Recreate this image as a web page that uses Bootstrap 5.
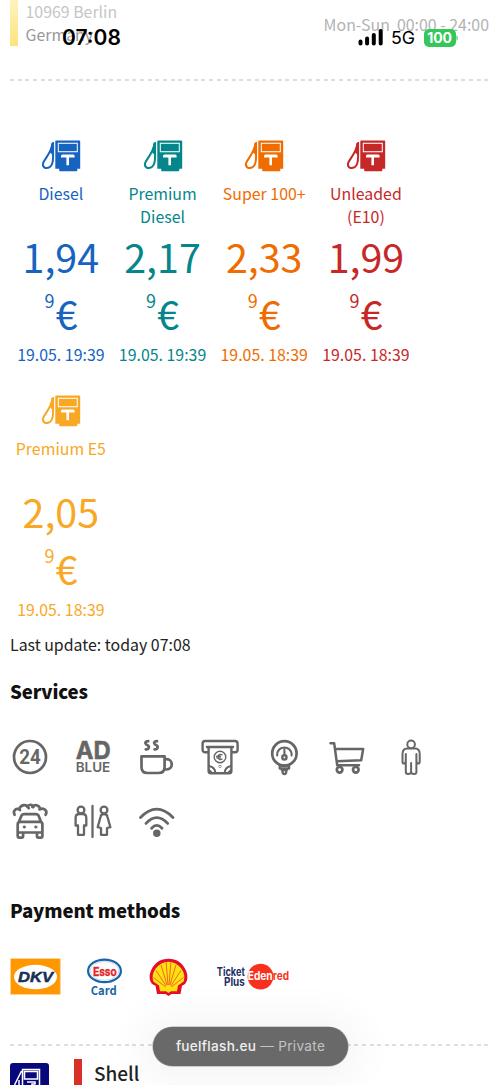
<!DOCTYPE html>
<html lang="en">
<head>
<meta charset="utf-8">
<meta name="viewport" content="width=device-width, initial-scale=1">
<title>fuelflash.eu</title>
<link href="https://cdn.jsdelivr.net/npm/bootstrap@5.3.0/dist/css/bootstrap.min.css" rel="stylesheet">
<style>
html,body{height:1085px;overflow:hidden}
body{font-family:"Noto Sans CJK SC",sans-serif;font-size:15.9px;line-height:23px;color:#222;background:#fff}
.screen{width:500px;height:1085px;padding:0 11px 0 10px}
.address{height:79px}
.address .bar{width:8px;height:46px;background:linear-gradient(#fdf3c0,#fde47c)}
.address .lines{padding:0 0 0 7.5px}
.address .hours{padding-top:13px;color:#b3b3b3;white-space:pre}
.dashes{height:2px;background:repeating-linear-gradient(90deg,#dedede 0 4px,transparent 4px 7.65px)}
.fuels{padding-top:59px}
.fuel{width:101.7px;height:254.5px}
.fuel svg{width:40px;height:32px}
.fuel .kind{height:46px;margin-top:10px;padding:0 6px}
.price{font-size:39.4px;line-height:57px;margin-top:-1px}
.price sup{font-size:18px;top:-22px;line-height:0;vertical-align:baseline;margin-right:1px}
.stamp{margin-top:2px;height:23px}
h2.section{font-size:18.6px;font-weight:900;line-height:26px;color:#111;letter-spacing:-.12px}
.services{width:447px;padding-left:1.5px;margin-top:35px;gap:28px 27.5px}
.services svg{width:36px;height:36px;fill:none;stroke:#666;stroke-width:2.7;stroke-linecap:round;stroke-linejoin:round;overflow:visible}
.logos{margin-top:35px;height:40px}
.nextstation{height:28px}
.redbar{width:8px;height:26px;background:#d9302a}
.statusbar{top:24px;left:0;width:500px;height:26px;font-family:Inter,sans-serif;color:#000}
.clock{font-size:21px;font-weight:600;line-height:28px}
.battery{width:32px;height:17.5px;border-radius:5px;background:#34c759;color:#fff;font-size:14px;font-weight:700;line-height:17.5px;letter-spacing:-.2px}
.urlpill{left:153px;top:1027px;width:195px;height:39px;background:#696969;box-shadow:0 2px 40px 14px rgba(0,0,0,.045),0 0 0 .6px #aaa;font:500 13.6px/39px Inter,sans-serif;color:#f0f0f0;letter-spacing:.3px}
.urlpill span{color:#c3c3c3;font-weight:400}
</style>
</head>
<body>
<svg class="d-none">
  <symbol id="pump" viewBox="0 0 40 32">
    <path fill="currentColor" fill-rule="evenodd" d="M15 .6H38.5Q39.2.6 39.2 1.4V28.7H36.3V30.4Q36.3 31.2 35.5 31.2H19.2Q18.2 31.2 18.2 30.4V28.7H14.3V1.4Q14.3.6 15 .6ZM16.8 2.8V12.2H36.8V2.8ZM20 15.2V17.6H25.4V25.3H28V17.6H33.6V15.2H32.8V14.6H20.8V15.2Z"/>
    <path fill="currentColor" d="M17.8 3.8H35.8V11.2H17.8Z"/>
    <path fill="none" stroke="currentColor" stroke-width="2" d="M11.6 3.2C10.5 12 5.2 17 2.5 22.2C.4 27 4.7 29.4 8.7 27.1C12.3 25 12.1 20 12.1 15.5V2.2"/>
    <path fill="currentColor" d="M10.4 3.5L13 1.8V16L9 12.5Z"/>
  </symbol>
</svg>
<main class="screen position-relative overflow-hidden">
  <section class="address d-flex">
    <div class="bar"></div>
    <div class="lines flex-grow-1"><div style="color:#c6c6c6">10969 Berlin</div><div style="color:#999">Germany</div></div>
    <div class="hours">Mon-Sun  00:00 - 24:00</div>
  </section>
  <div class="dashes"></div>

  <section class="fuels d-flex flex-wrap text-center">
    <article class="fuel" style="color:#1763c0"><svg class="d-block mx-auto"><use href="#pump"/></svg><div class="kind">Diesel</div><div class="price">1,94<br><sup>9</sup>€</div><div class="stamp">19.05. 19:39</div></article>
    <article class="fuel" style="color:#05868b"><svg class="d-block mx-auto"><use href="#pump"/></svg><div class="kind">Premium Diesel</div><div class="price">2,17<br><sup>9</sup>€</div><div class="stamp">19.05. 19:39</div></article>
    <article class="fuel" style="color:#ef6c00"><svg class="d-block mx-auto"><use href="#pump"/></svg><div class="kind">Super 100+</div><div class="price">2,33<br><sup>9</sup>€</div><div class="stamp">19.05. 18:39</div></article>
    <article class="fuel" style="color:#c62828"><svg class="d-block mx-auto"><use href="#pump"/></svg><div class="kind">Unleaded (E10)</div><div class="price">1,99<br><sup>9</sup>€</div><div class="stamp">19.05. 18:39</div></article>
    <article class="fuel" style="color:#f9a825"><svg class="d-block mx-auto"><use href="#pump"/></svg><div class="kind text-nowrap px-0">Premium E5</div><div class="price">2,05<br><sup>9</sup>€</div><div class="stamp">19.05. 18:39</div></article>
  </section>

  <p class="update mb-0" style="margin-top:-16px">Last update: today 07:08</p>

  <h2 class="section mb-0" style="margin-top:21.5px">Services</h2>
  <div class="services d-flex flex-wrap">
    <svg viewBox="0 0 36 36"><circle cx="18" cy="18" r="16"/><text x="18" y="25" text-anchor="middle" font-family="Roboto" font-weight="700" font-size="20" fill="#666" stroke="none" textLength="21.5" lengthAdjust="spacingAndGlyphs">24</text></svg>
    <svg viewBox="0 0 36 36"><g fill="#666" text-anchor="middle" font-family="Inter"><text x="18.2" y="20" font-size="24.5" font-weight="700" stroke-width=".5" textLength="35" lengthAdjust="spacingAndGlyphs">AD</text><text x="18" y="33.4" font-size="13.4" font-weight="600" stroke="none" textLength="34.5" lengthAdjust="spacingAndGlyphs">BLUE</text></g></svg>
    <svg viewBox="0 0 36 36"><path d="M2.5 17.3H25.6V28Q25.6 34 19.5 34H8.5Q2.5 34 2.5 28ZM25.8 20.2H27.5C34.5 20.2 34.5 30.5 27.5 30.5H25.4M9.2 2.2Q6 2.5 6.4 4.3Q6.7 5.7 8.4 6.2Q10.5 7 9.6 9.2Q8.8 10.8 6.8 10.4M18 2.2Q14.8 2.5 15.2 4.3Q15.5 5.7 17.2 6.2Q19.3 7 18.4 9.2Q17.6 10.8 15.6 10.4"/></svg>
    <svg viewBox="0 0 36 36"><g stroke-width="2.4"><path d="M6 13.2H2.8Q.6 13.2.6 10.5V4.8Q.6 2 3 2H33Q35.6 2 35.6 4.8V10.5Q35.6 13.2 33.2 13.2H30M5 8H31M6.6 8.4V32Q6.6 34.3 9 34.3H27Q29.4 34.3 29.4 32V8.4"/><circle cx="18" cy="18" r="5.8" stroke-width="1.4"/><path stroke-width="1.4" d="M20 15.8Q16.5 14.3 16.2 18Q16.5 21.7 20 20.2M14.7 17.2H18.4M14.7 18.9H18.4"/><circle cx="18" cy="27.3" r=".3"/><path d="M7 27Q13 28 13.4 34M29 27Q23 28 22.6 34M7 31L10 34M29 31L26 34" stroke-width="2"/></g></svg>
    <svg viewBox="0 0 36 36"><circle cx="18.4" cy="14.4" r="12.2"/><path stroke-width="2.1" d="M11.2 16.5C10.5 5.8 26.3 5.8 25.6 16.5M18.4 10.5V16"/><circle cx="18.4" cy="18.4" r="2.1" stroke-width="2.4"/><path stroke-width="2.3" d="M13.7 26.7H23.1V29.5H13.7ZM15.3 30L16 31.2H20.8L21.5 30M16.6 31.5V33Q16.6 35 18.4 35Q20.2 35 20.2 33V31.5"/></svg>
    <svg viewBox="0 0 36 36"><path d="M1.5 4.3H5.2L8.2 26.3H30M5.9 9.9H34.2L32.2 21.2L7.8 22.3" stroke-width="2.5"/><circle cx="10.6" cy="30.8" r="2.8"/><circle cx="26.8" cy="30.8" r="2.8"/></svg>
    <svg viewBox="0 0 36 36"><g stroke-width="2"><circle cx="18.1" cy="5.4" r="3.8"/><path d="M14.1 9.4H22.2C25.7 9.4 26.7 12.5 26.7 15V23Q26.7 25 24.7 24.5L23.4 22.5V33Q23.4 35 21.2 35Q18.1 35 18.1 33V24M18.1 33Q18.1 35 15 35Q12.8 35 12.8 33V22.5L11.5 24.5Q9.5 25 9.5 23V15C9.5 12.5 10.5 9.4 14.1 9.4M12.8 15V23M23.4 15V23"/></g></svg>
    <svg viewBox="0 0 36 36"><path d="M7 18.8L9.5 12.5Q10.3 11.2 12 11.2H24Q25.7 11.2 26.5 12.5L29 18.8M5.7 21.5Q5.7 18.8 8 18.8H28Q30.4 18.8 30.4 21.5V33Q30.4 34.6 28.8 34.6H26.4Q25 34.6 25 33V29.5H11.1V33Q11.1 34.6 9.7 34.6H7.3Q5.7 34.6 5.7 33ZM6.5 29.5H29.5M2.6 11.8C.4 7.5 4.5 4 8 7M7.4 5.5C9.2 1.2 15 .8 16.8 5.2M15.2 3.8C17 .8 20.4 1.2 21.4 4.2M20.2 3.9C23.2.8 28 2.4 28 6.5M27.5 6.3C32 4 36 7.8 33.6 11.8"/><g fill="#666" stroke-width="1"><circle cx="12.2" cy="24" r="1.1"/><circle cx="23.8" cy="24" r="1.1"/></g></svg>
    <svg viewBox="0 0 36 36"><g stroke-width="2.3"><circle cx="6" cy="7" r="3.4"/><path d="M4.2 11H7.8Q11.3 11 11.3 15V22.5H9V31.8H3V22.5H.6V15Q.6 11 4.2 11ZM17.5 3V34"/><circle cx="29" cy="7" r="3.4"/><path d="M29 11Q32 11 32.5 14L35.4 24.2L32 25V31.8H26V25L22.7 24.2L25.5 14Q26 11 29 11Z"/></g></svg>
    <svg viewBox="0 0 36 36"><path d="M1.5 14.5Q17.7-2.2 34 14.5M7 20.4Q17.7 8.8 28.7 20.4M12.6 25.2Q17.7 19.7 23 25.2" stroke-width="2.8"/><circle cx="17.8" cy="30.2" r="2.4" fill="#666"/></svg>
  </div>

  <h2 class="section mb-0" style="margin-top:58.5px">Payment methods</h2>
  <div class="logos d-flex">
    <svg width="280" height="40" viewBox="0 0 280 40">
      <rect x=".4" y=".5" width="50" height="36" rx="1" fill="#ff9800" stroke="#ffd394"/>
      <ellipse cx="25.5" cy="19" rx="21.5" ry="12.3" fill="#fff"/>
      <text x="25.5" y="24.3" text-anchor="middle" font-family="Liberation Sans" font-style="italic" font-weight="700" font-size="15.5" fill="#193055" stroke="#193055" stroke-width=".5" textLength="35" lengthAdjust="spacingAndGlyphs">DKV</text>
      <ellipse cx="94.5" cy="12.9" rx="16.4" ry="11.3" fill="#fff" stroke="#1765a8" stroke-width="2.2"/>
      <ellipse cx="94.5" cy="12.9" rx="14.4" ry="9.4" fill="none" stroke="#b6c9de" stroke-width=".7"/>
      <text x="94.8" y="17.7" text-anchor="middle" font-family="Roboto" font-weight="700" font-size="13.5" fill="#e32528" stroke="#e32528" stroke-width=".3" textLength="23.5" lengthAdjust="spacingAndGlyphs">Esso</text>
      <text x="93.7" y="36.8" text-anchor="middle" font-family="Noto Sans CJK SC" font-weight="700" font-size="12" fill="#1765a8" textLength="26" lengthAdjust="spacingAndGlyphs">Card</text>
      <path d="M147 36L145.5 27.8C139 26 138.5 18 141 12.5C144.5 4.5 151 .8 158.5.8S172.5 4.5 176 12.5C178.5 18 178 26 172 27.8L170.5 36H161.5L158.5 38L155.5 36Z" fill="#e40d2b"/>
      <path d="M150 33.3L149 27.5L143.3 23.5Q141.2 17 145.3 11Q151 3.8 158.5 3.8T171.7 11Q175.8 17 173.7 23.5L168 27.5L167 33.3H161L158.5 35L156 33.3Z" fill="#ffe011"/>
      <path d="M155.7 29L143.5 19.5M156.2 28L146 12.5M157 27L151 6.8M158 27L156.2 4.5M159 27L160.8 4.5M160 27L166 6.8M160.8 28L171 12.5M161.3 29L173.5 19.5" stroke="#eb352a" stroke-width=".7"/>
      <g font-family="Inter" font-weight="700" font-size="11.8" fill="#202f65"><text x="206.8" y="18.3" textLength="28" lengthAdjust="spacingAndGlyphs">Ticket</text><text x="214" y="27.6" textLength="20.8" lengthAdjust="spacingAndGlyphs">Plus</text></g>
      <circle cx="250.5" cy="18.6" r="12.9" fill="#f9301d"/>
      <g font-family="Inter" font-weight="700" font-size="11.5"><text x="237.8" y="22.1" fill="#fff" textLength="24.7" lengthAdjust="spacingAndGlyphs">Eden</text><text x="262.8" y="22.1" fill="#f9301d" textLength="16.2" lengthAdjust="spacingAndGlyphs">red</text></g>
    </svg>
  </div>
  <div class="dashes" style="margin-top:46px"></div>
  <section class="nextstation d-flex" style="margin-top:13px">
    <svg width="39" height="39" viewBox="0 0 39 39" style="margin-top:4px;color:#fff"><rect width="39" height="39" rx="3" fill="#08087d"/><path d="M12.5 39V6.5H29.5V39M14.5 8.5H27.5V16H14.5ZM17 19H25V21H22V29M11.5 8L4.5 22M9 17V23" fill="none" stroke="#fff" stroke-width="1.5"/></svg>
    <div class="redbar" style="margin-left:25px"></div>
    <div class="fw-medium" style="font-size:19px;margin-left:12px;line-height:28px">Shell</div>
  </section>

  <div class="statusbar position-absolute">
    <span class="clock position-absolute" style="left:62px">07:08</span>
    <svg class="position-absolute" style="left:358px;top:5px" width="27" height="17"><path d="M2.5 12.5V14.5M9.1 9.5V14.5M15.8 6V14.5M22.7 2V14.5" stroke="#000" stroke-width="4" stroke-linecap="round"/></svg>
    <span class="position-absolute" style="left:391px;font-size:17.8px;line-height:28px">5G</span>
    <span class="battery position-absolute text-center" style="left:423.5px;top:5px">100</span>
    <svg class="position-absolute" style="left:456px;top:11px" width="3" height="6"><path d="M.5 0Q3 3 .5 6Z" fill="#34c759"/></svg>
  </div>
  <div class="urlpill position-absolute rounded-pill text-center">fuelflash.eu <span>— Private</span></div>
</main>
<script src="https://cdn.jsdelivr.net/npm/bootstrap@5.3.0/dist/js/bootstrap.bundle.min.js"></script>
</body>
</html>
